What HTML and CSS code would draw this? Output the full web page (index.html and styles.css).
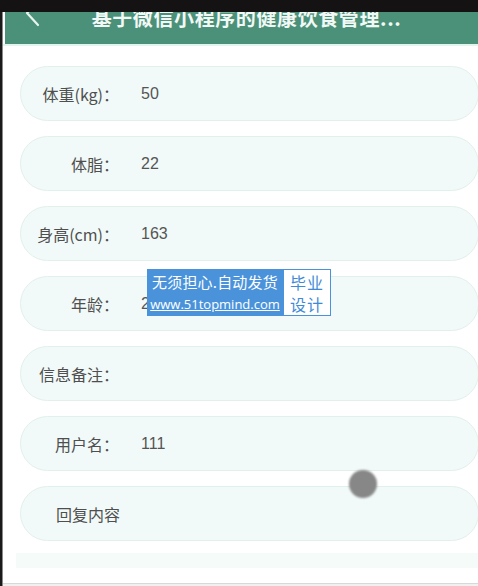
FILE: index.html
```html
<!DOCTYPE html>
<html lang="zh">
<head>
<meta charset="utf-8">
<title>健康饮食管理</title>
<link rel="stylesheet" href="styles.css">
</head>
<body>
<div class="topband"></div>
<div class="screen">
  <header class="nav">
    <svg class="back" width="20" height="30" viewBox="0 0 20 30"><polyline points="14,2 4,12 15,24" fill="none" stroke="#e8f3ee" stroke-width="2.2" stroke-linecap="round" stroke-linejoin="round"/></svg>
    <h1 class="title">基于微信小程序的健康饮食管理...</h1>
  </header>
  <div class="divider"></div>
  <main class="form">
    <div class="row"><span class="label">体重(kg)：</span><span class="value">50</span></div>
    <div class="row"><span class="label">体脂：</span><span class="value">22</span></div>
    <div class="row"><span class="label">身高(cm)：</span><span class="value">163</span></div>
    <div class="row"><span class="label">年龄：</span><span class="value">25</span></div>
    <div class="row"><span class="label">信息备注：</span><span class="value"></span></div>
    <div class="row"><span class="label">用户名：</span><span class="value">111</span></div>
    <div class="row reply"><span class="placeholder">回复内容</span></div>
    <div class="row partial"></div>
  </main>
  <div class="bottom-line"></div>
</div>
<div class="watermark">
  <div class="wm-blue">
    <span class="wm-line1">无须担心.自动发货</span>
    <span class="wm-line2">www.51topmind.com</span>
  </div>
  <div class="wm-white">
    <span class="wm-cell">毕业</span>
    <span class="wm-cell">设计</span>
  </div>
</div>
<div class="touch-dot"></div>
</body>
</html>
```

FILE: styles.css
```css
* { box-sizing: border-box; }
html, body { margin: 0; padding: 0; }
body {
  width: 478px;
  height: 586px;
  overflow: hidden;
  background: #1a1a1a;
  font-family: "Noto Sans CJK SC", "Liberation Sans", sans-serif;
  position: relative;
}
.topband {
  position: absolute;
  left: 0; top: 0;
  width: 478px; height: 12px;
  background: #141212;
  z-index: 5;
}
.screen {
  height: 586px;
  margin-left: 2px;
  background: #ffffff;
  border-left: 1px solid #8a8a8a;
  display: flex;
  flex-direction: column;
}
.nav {
  height: 45px;
  margin-left: 2px;
  background: #4b9179;
  display: flex;
  align-items: flex-start;
  position: relative;
}
.back {
  position: absolute;
  left: 18px;
  top: 1px;
}
.title {
  margin: 4px 0 0 0;
  width: 100%;
  text-align: center;
  padding-left: 10px;
  font-size: 20px;
  line-height: 28px;
  font-weight: bold;
  color: #f2f8f5;
  letter-spacing: 0.6px;
}
.divider {
  height: 2px;
  background: #e3f4ed;
}
.form {
  padding: 20px 0 0 17px;
  display: flex;
  flex-direction: column;
  gap: 15px;
}
.row {
  height: 55px;
  margin-right: -1px;
  border: 1px solid #e2f0ec;
  border-radius: 28px;
  background: #f1faf8;
  display: flex;
  align-items: center;
  font-size: 16px;
  color: #4f4f4f;
}
.label {
  width: 98px;
  text-align: right;
  flex: none;
  white-space: nowrap;
}
.value {
  margin-left: 22px;
  font-family: "Liberation Sans", "Noto Sans CJK SC", sans-serif;
  color: #555555;
}
.reply .placeholder {
  padding-left: 35px;
  color: #4f4f4f;
}
.partial {
  height: 15px;
  margin-top: -3px;
  margin-left: -4px;
  border: none;
  border-radius: 0;
  background: #f5fbf9;
}
.bottom-line {
  margin-top: 15px;
  height: 3px;
  border-top: 1px solid #d8d8d8;
  background: #f0f0f0;
}
.watermark {
  position: absolute;
  left: 147px;
  top: 269px;
  display: flex;
  z-index: 4;
}
.wm-blue {
  width: 136px;
  height: 47px;
  background: #4a93db;
  color: #ffffff;
  display: flex;
  flex-direction: column;
  align-items: center;
  padding-top: 2px;
}
.wm-line1 {
  display: block;
  font-size: 15px;
  line-height: 22px;
  letter-spacing: 0.2px;
}
.wm-line2 {
  display: block;
  margin-top: 2px;
  font-family: "Open Sans", "Liberation Sans", sans-serif;
  font-size: 13px;
  line-height: 18px;
  text-decoration: underline;
}
.wm-white {
  width: 48px;
  height: 47px;
  background: #ffffff;
  border: 1px solid #4a93db;
  color: #3e89d8;
  display: flex;
  flex-direction: column;
  align-items: center;
  justify-content: center;
}
.wm-cell {
  display: block;
  font-size: 16px;
  line-height: 22px;
  letter-spacing: 1px;
}
.touch-dot {
  position: absolute;
  left: 349px;
  top: 470px;
  width: 28px;
  height: 28px;
  border-radius: 50%;
  background: #878787;
  filter: blur(1px);
  z-index: 6;
}
```
